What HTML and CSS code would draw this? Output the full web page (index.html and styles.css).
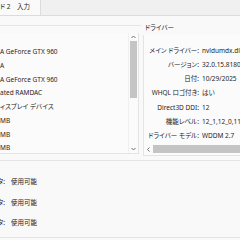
FILE: index.html
```html
<!DOCTYPE html>
<html lang="ja">
<head>
<meta charset="utf-8">
<title>DirectX 診断ツール</title>
<link rel="stylesheet" href="styles.css">
</head>
<body>
<div class="win">
  <div class="tabs">
    <div class="tab first">ド 2</div>
    <div class="tab second">入力</div>
  </div>
  <div class="page">
    <div class="top">
      <section class="grp dev">
        <div class="list">
          <ul class="rows">
            <li>A GeForce GTX 960</li>
            <li>A</li>
            <li>A GeForce GTX 960</li>
            <li>ated RAMDAC</li>
            <li>ィスプレイ デバイス</li>
            <li>MB</li>
            <li>MB</li>
            <li>MB</li>
          </ul>
          <div class="vbar">
            <svg class="arr" width="9" height="8" viewBox="0 0 9 8"><path d="M2.5 5 L4.5 3 L6.5 5" fill="none" stroke="#707070" stroke-width="1"/></svg>
            <div class="track"><div class="thumb"></div></div>
            <svg class="arr" width="9" height="8" viewBox="0 0 9 8"><path d="M2.5 3 L4.5 5 L6.5 3" fill="none" stroke="#707070" stroke-width="1"/></svg>
          </div>
        </div>
      </section>
      <section class="grp drv">
        <h3 class="legend">ドライバー</h3>
        <div class="info">
          <dl class="kv">
            <dt>メイン ドライバー:</dt><dd>nvldumdx.dll</dd>
            <dt>バージョン:</dt><dd>32.0.15.8180</dd>
            <dt>日付:</dt><dd>10/29/2025</dd>
            <dt>WHQL ロゴ付き:</dt><dd>はい</dd>
            <dt>Direct3D DDI:</dt><dd>12</dd>
            <dt>機能レベル:</dt><dd>12_1,12_0,11</dd>
            <dt>ドライバー モデル:</dt><dd>WDDM 2.7</dd>
          </dl>
          <div class="hbar">
            <svg class="arr" width="9" height="9" viewBox="0 0 9 9"><path d="M5.5 2.5 L3.5 4.5 L5.5 6.5" fill="none" stroke="#707070" stroke-width="1"/></svg>
            <div class="htrack"><div class="hthumb"></div></div>
          </div>
        </div>
      </section>
    </div>
    <section class="grp feat">
      <dl class="feats">
        <dt>DirectDraw アクセラレータ:</dt><dd>使用可能</dd>
        <dt>Direct3D アクセラレータ:</dt><dd>使用可能</dd>
        <dt>AGP テクスチャ アクセラレータ:</dt><dd>使用可能</dd>
      </dl>
    </section>
  </div>
</div>
</body>
</html>
```

FILE: styles.css
```css
* { box-sizing: border-box; margin: 0; padding: 0; }
html, body { width: 240px; height: 240px; overflow: hidden; }
body {
  background: #f0f0f0;
  font-family: "Noto Sans", "Noto Sans CJK JP", sans-serif;
  font-feature-settings: "palt" 1;
  font-size: 6.5px;
  color: #262626;
  line-height: 1;
}
.win { display: flex; flex-direction: column; height: 240px; }

.tabs { display: flex; height: 16px; border-bottom: 1px solid #dcdcdc; }
.tab {
  display: flex; align-items: center; white-space: nowrap;
  background: #fafafa; border-right: 1px solid #dcdcdc;
}
.tab.first { width: 15px; border-right: none; }
.tab.second { width: 26px; padding-left: 2px; }

.page { flex: 1; display: flex; flex-direction: column; background: #f9f9f9; min-width: 0; }
.top { display: flex; padding-top: 9px; }

.grp { position: relative; }
.dev { width: 141px; flex: none; border-top: 1px solid #e6e6e6; padding-top: 7px; }
.list { display: flex; height: 121px; background: #fbfbfb; border-right: 1px solid #e4e4e4; border-bottom: 1px solid #e4e4e4; width: 139px; }
.rows { list-style: none; flex: 1; padding-top: 12px; }
.rows li { height: 13.75px; line-height: 13.75px; white-space: nowrap; }
.vbar { width: 10px; display: flex; flex-direction: column; align-items: center; border-left: 1px solid #f0f0f0; }
.arr { display: block; flex: none; }
.track { flex: 1; width: 100%; padding: 0 1px; }
.thumb { height: 57px; background: #c4c4c4; }

.drv { flex: 1; min-width: 0; margin-left: 2px; display: flex; flex-direction: column; }
.legend { font-weight: normal; font-size: 6.5px; height: 8px; line-height: 8px; padding-left: 2px; margin-top: -1px; }
.info { margin-top: 3px; border-left: 1px solid #e4e4e4; border-bottom: 1px solid #e4e4e4; background: #fbfbfb; height: 121px; display: flex; flex-direction: column; overflow: hidden; }
.kv { display: grid; grid-template-columns: 55px auto; column-gap: 3px; padding-top: 9px; flex: 1; white-space: nowrap; }
.kv dt { text-align: right; height: 14px; line-height: 14px; }
.kv dd { height: 14px; line-height: 14px; }
.hbar { display: flex; align-items: center; height: 12px; }
.htrack { flex: 1; height: 100%; padding: 2px 0; }
.hthumb { height: 100%; background: #c4c4c4; }

.feat { flex: 1; margin-top: 4px; border-top: 1px solid #e4e4e4; border-bottom: 1px solid #e4e4e4; margin-bottom: 2px; }
.feats { display: grid; grid-template-columns: 5px auto; column-gap: 6px; padding-top: 11px; white-space: nowrap; }
.feats dt { display: flex; justify-content: flex-end; height: 20.5px; line-height: 20.5px; }
.feats dd { height: 20.5px; line-height: 20.5px; }
```
